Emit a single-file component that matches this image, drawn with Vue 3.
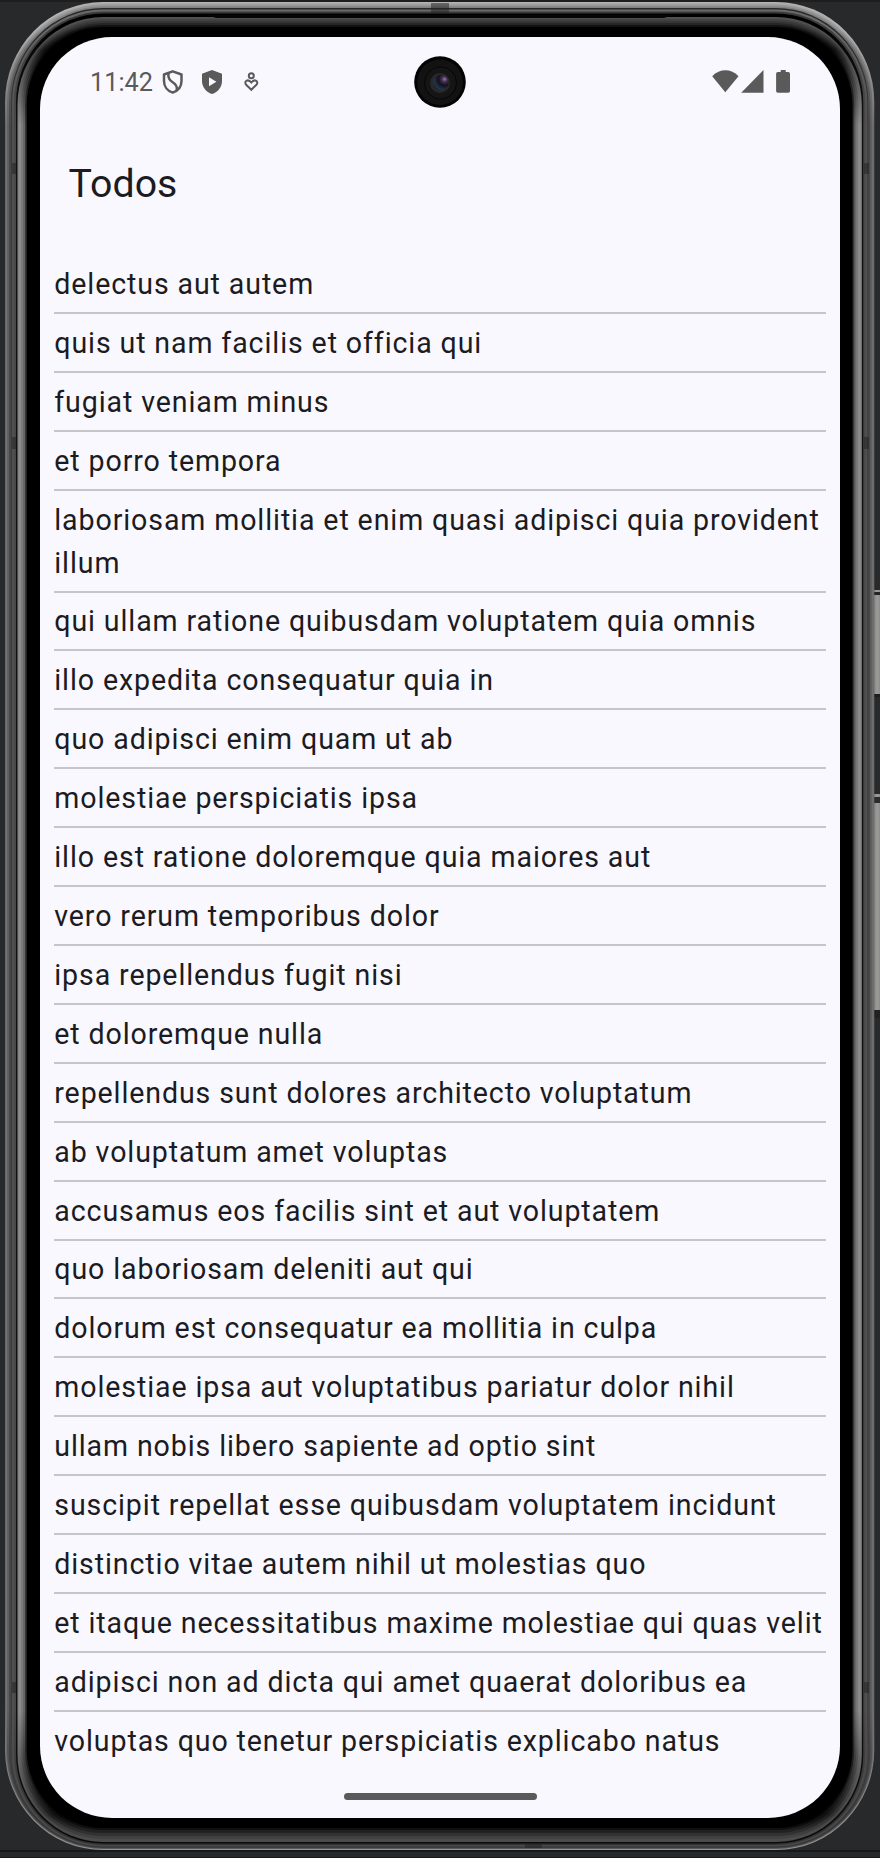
<script setup>
const todos = [
  'delectus aut autem',
  'quis ut nam facilis et officia qui',
  'fugiat veniam minus',
  'et porro tempora',
  'laboriosam mollitia et enim quasi adipisci quia provident illum',
  'qui ullam ratione quibusdam voluptatem quia omnis',
  'illo expedita consequatur quia in',
  'quo adipisci enim quam ut ab',
  'molestiae perspiciatis ipsa',
  'illo est ratione doloremque quia maiores aut',
  'vero rerum temporibus dolor',
  'ipsa repellendus fugit nisi',
  'et doloremque nulla',
  'repellendus sunt dolores architecto voluptatum',
  'ab voluptatum amet voluptas',
  'accusamus eos facilis sint et aut voluptatem',
  'quo laboriosam deleniti aut qui',
  'dolorum est consequatur ea mollitia in culpa',
  'molestiae ipsa aut voluptatibus pariatur dolor nihil',
  'ullam nobis libero sapiente ad optio sint',
  'suscipit repellat esse quibusdam voluptatem incidunt',
  'distinctio vitae autem nihil ut molestias quo',
  'et itaque necessitatibus maxime molestiae qui quas velit',
  'adipisci non ad dicta qui amet quaerat doloribus ea',
  'voluptas quo tenetur perspiciatis explicabo natus'
]

// Metal rim, outside in: side inset, top, bottom, then colours at the top, corner, side and bottom.
const rings = [
  [5, 2, 1850, '#b4b4b4', '#a8a8a8', '#686868', '#929292'],
  [6, 3, 1849, '#aaaaaa', '#989898', '#747474', '#5a5a5a'],
  [7, 4.5, 1848, '#969696', '#808080', '#606060', '#3c3c3c'],
  [9, 6.5, 1847, '#808080', '#686868', '#484848', '#333333'],
  [11, 8, 1846.5, '#2a2a2a', '#303030', '#3a3a3a', '#4a4a4a'],
  [12, 9.5, 1846, '#6a6a6a', '#5e5e5e', '#505050', '#484848'],
  [14, 11.5, 1845, '#3a3a3a', '#404040', '#484848', '#333333'],
  [16, 13.5, 1843.5, '#000000', '#080808', '#101010', '#0a0a0a'],
  [17.5, 17, 1842, '#505050', '#444444', '#868686', '#4c4c4c'],
  [19, 19, 1839, '#424242', '#303030', '#8c8c8c', '#424242'],
  [21, 21, 1836, '#363636', '#1c1c1c', '#7c7c7c', '#363636'],
  [23, 23, 1833, '#262626', '#101010', '#686868', '#282828'],
  [25, 25, 1830, '#121212', '#060606', '#363636', '#161616'],
  [26.7, 27, 1828, '#000000', '#000000', '#000000', '#000000']
]

const seams = [
  [12, 163, 4, 11], [864, 163, 5, 11],
  [12, 437, 4, 12], [864, 437, 5, 12],
  [12, 1682, 4, 11], [864, 1682, 5, 11],
  [431, 3, 18, 11], [525, 1844, 17, 4]
]
</script>

<template>
  <div class="stage">
    <svg class="device" viewBox="0 0 880 1858" aria-hidden="true">
      <defs>
        <linearGradient
          v-for="(r, i) in rings"
          :id="'rim' + i"
          :key="i"
          gradientUnits="userSpaceOnUse"
          x1="0"
          y1="0"
          x2="0"
          y2="1858"
        >
          <stop :offset="28 / 1858" :stop-color="r[3]" />
          <stop :offset="50 / 1858" :stop-color="r[4]" />
          <stop :offset="125 / 1858" :stop-color="r[5]" />
          <stop :offset="1710 / 1858" :stop-color="r[5]" />
          <stop :offset="1815 / 1858" :stop-color="i > 7 ? r[4] : r[6]" />
          <stop :offset="1838 / 1858" :stop-color="r[6]" />
        </linearGradient>
        <linearGradient id="key" x1="0" x2="1" y1="0" y2="0">
          <stop offset="0" stop-color="#828280" />
          <stop offset="0.5" stop-color="#9c9c9a" />
          <stop offset="1" stop-color="#8c8c8a" />
        </linearGradient>
        <radialGradient id="lens" cx="0.74" cy="0.28" r="0.85">
          <stop offset="0" stop-color="#9a74b4" />
          <stop offset="0.2" stop-color="#443050" />
          <stop offset="0.45" stop-color="#15101c" />
          <stop offset="0.8" stop-color="#20374b" />
          <stop offset="1" stop-color="#141c24" />
        </radialGradient>
      </defs>

      <rect width="880" height="2" fill="#1e1e1e" />
      <rect y="1850" width="880" height="2" fill="#17181a" />
      <rect y="1857" width="880" height="1" fill="#191a1c" />

      <rect x="874" y="590" width="6" height="105" fill="url(#key)" />
      <rect x="874" y="592" width="6" height="3" fill="#242424" />
      <rect x="874" y="694" width="6" height="3" fill="#1d1e1f" />
      <rect x="874" y="794" width="6" height="218" fill="url(#key)" />
      <rect x="874" y="797" width="6" height="6" fill="#2c2c2c" />
      <rect x="874" y="1010" width="6" height="8" fill="#202122" />

      <rect
        v-for="(r, i) in rings"
        :key="i"
        :x="r[0]"
        :y="r[1]"
        :width="879.3 - 2 * r[0]"
        :height="r[2] - r[1]"
        :rx="103 - r[0]"
        :ry="105 - r[0]"
        :fill="`url(#rim${i})`"
      />
      <path d="M207 15h466l-9 3H216z" fill="#050505" />
      <rect
        v-for="(s, i) in seams"
        :key="'s' + i"
        :x="s[0]"
        :y="s[1]"
        :width="s[2]"
        :height="s[3]"
        fill="#202020"
        opacity="0.5"
      />
    </svg>

    <main class="screen">
      <header class="status">
        <span class="clock">11:42</span>
        <svg class="notices" width="100" height="26" viewBox="0 0 100 26">
          <g fill="none" stroke="#5a5a5b" stroke-width="2.5">
            <path d="M12.7 2.3 4 5.500V12c0 5.400 3.500 10 8.700 11.600 5.200-1.800 8.800-6.200 8.800-11.600V5.500z" stroke-linejoin="round" />
            <path d="M8.500 4.200c-.8 4.400.5 6.700 4.200 9 3.900 2.400 4.800 4.500 4 8" />
            <circle cx="91.300" cy="6.700" r="2.500" stroke-width="2" />
            <path d="M91.300 20.800 86.400 16c-3.300-3.600 1.600-6.700 4.900-2.500 3.300-4.200 8.200-1.100 4.900 2.500z" stroke-width="2" />
          </g>
          <path d="M52 1 62 4.700V12c0 6-4 11.300-10 13-6-1.700-10-7-10-13V4.700z" fill="#5a5a5b" />
          <path d="M49 8.200v9l7.400-4.500z" fill="#f9f8ff" />
        </svg>
        <svg class="signals" width="80" height="26" viewBox="0 0 80 26">
          <g fill="#5a5a5b">
            <path d="M2.200 7.200C9.800-.6 21-.6 28.500 7.200L15.300 23.300z" />
            <path d="M53.500 1v22.700H31.200z" />
            <path d="M70.700 1h5v2.100h2.600q1.700 0 1.700 1.700v17.300q0 1.700-1.700 1.700H67.800q-1.700 0-1.700-1.700V4.800q0-1.700 1.700-1.700h2.900z" />
          </g>
        </svg>
      </header>
      <h1 class="title">Todos</h1>
      <ul class="list">
        <li v-for="todo in todos" :key="todo" class="item">
          <p class="text">{{ todo }}</p>
          <div class="divider"></div>
        </li>
      </ul>
      <div class="handle"></div>
      <svg class="camera" width="52" height="52" viewBox="0 0 52 52">
        <circle cx="26" cy="26" r="25.800" fill="#030303" />
        <circle cx="26" cy="26.200" r="22.800" fill="#121212" />
        <circle cx="26.500" cy="27" r="16" fill="#151515" stroke="#060606" />
        <circle cx="26" cy="27" r="10" fill="#292929" />
        <circle cx="26.700" cy="26.700" r="8" fill="url(#lens)" />
      </svg>
    </main>
  </div>
</template>

<style>
body {
  margin: 0;
  background: #28292b;
}
</style>

<style scoped>
.stage {
  position: relative;
  box-sizing: border-box;
  width: 880px;
  height: 1858px;
  padding: 37px 40px 40px;
  overflow: hidden;
  background: #28292b;
  font-family: Roboto, sans-serif;
}
.device {
  position: absolute;
  inset: 0;
  width: 880px;
  height: 1858px;
}
.screen {
  position: relative;
  display: flex;
  flex-direction: column;
  width: 800px;
  height: 1781px;
  overflow: hidden;
  border-radius: 72px;
  background: #f9f8ff;
  color: #1b1b21;
}
.status {
  display: flex;
  align-items: center;
  flex: none;
  box-sizing: border-box;
  height: 89.3px;
  padding: 0 50px;
}
.clock {
  box-sizing: border-box;
  width: 70px;
  padding-top: 1px;
  font-size: 25.3px;
  line-height: 31px;
  color: #5a5a5b;
}
.notices,
.signals {
  flex: none;
}
.signals {
  margin-left: auto;
}
.title {
  flex: none;
  box-sizing: border-box;
  height: 114.3px;
  margin: 0;
  padding: 1.2px 0 0 28.57px;
  font-size: 39.29px;
  font-weight: 400;
  line-height: 114.3px;
}
.list {
  flex: none;
  margin: 0;
  padding: 14.6px 14.29px 0;
  list-style: none;
}
.text {
  margin: 0;
  padding: 7.9px 0 6.17px;
  font-size: 28.57px;
  line-height: 42.857px;
  letter-spacing: 0.893px;
}
.divider {
  height: 2px;
  background: #c6c6c8;
}
.item:last-child .divider {
  display: none;
}
.handle {
  flex: none;
  align-self: center;
  width: 193px;
  height: 7px;
  margin: auto 0 18px;
  border-radius: 4px;
  background: #5a5a5b;
}
.camera {
  position: absolute;
  top: 18.5px;
  left: 374px;
}
</style>
